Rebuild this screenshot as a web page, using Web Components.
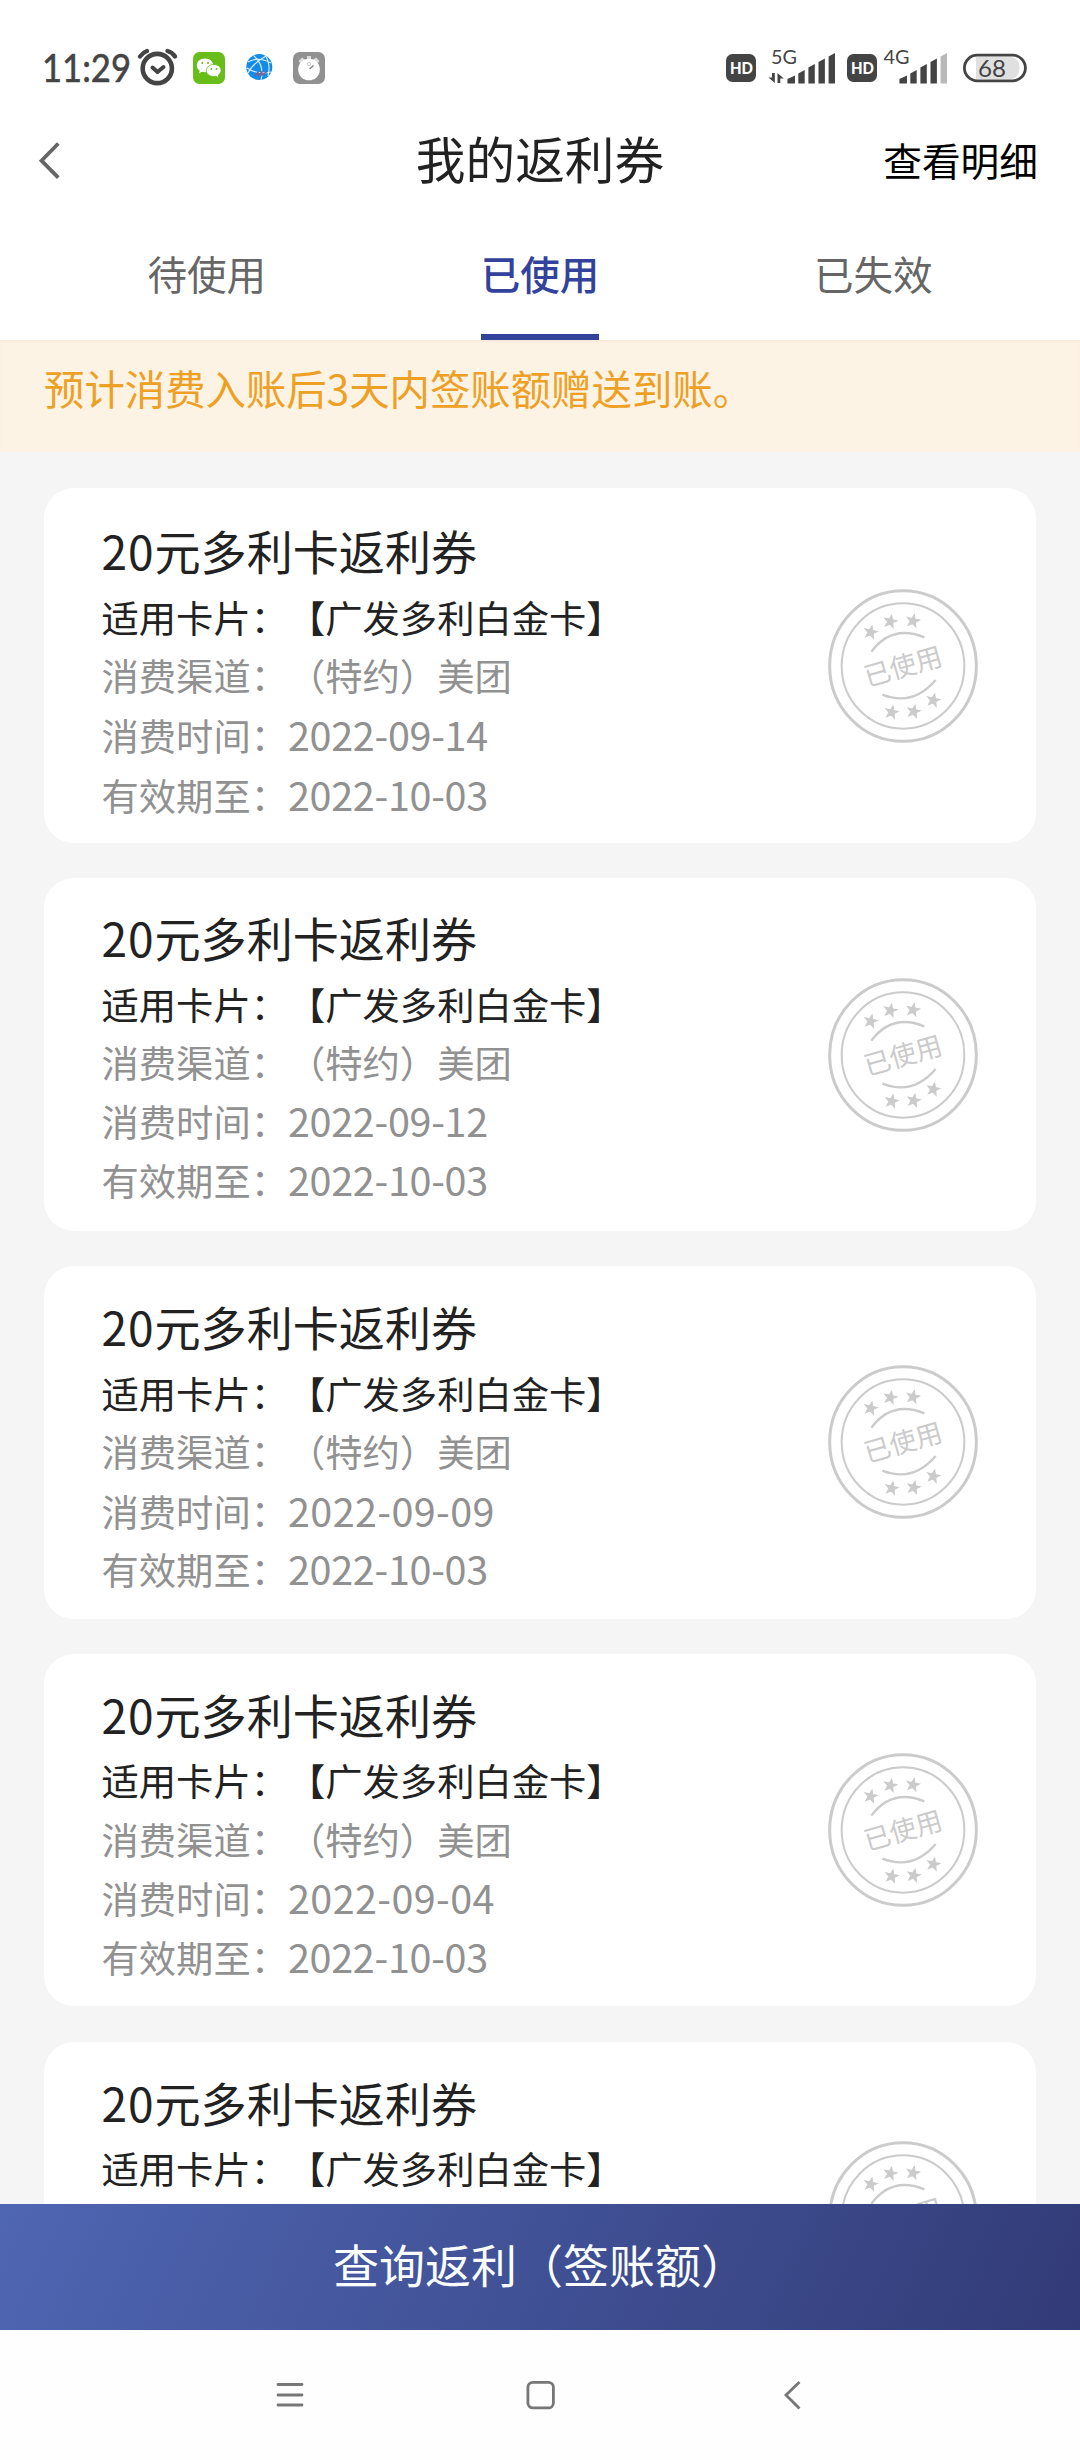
<!DOCTYPE html>
<html lang="zh-CN">
<head>
<meta charset="utf-8">
<title>我的返利券</title>
<style>
  body {
    margin: 0;
    background: #f5f5f5;
    font-family: "Noto Sans CJK SC", sans-serif;
    text-spacing-trim: space-all;
    color: #222;
  }
</style>
</head>
<body>
<coupon-page>
  <status-bar slot="top"></status-bar>
  <nav-header slot="top">我的返利券<span slot="action">查看明细</span></nav-header>
  <tab-bar slot="top">
    <tab-item>待使用</tab-item>
    <tab-item active>已使用</tab-item>
    <tab-item>已失效</tab-item>
  </tab-bar>
  <notice-bar slot="top">预计消费入账后3天内签账额赠送到账。</notice-bar>

  <coupon-card channel="（特约）美团" spent="2022-09-14" until="2022-10-03" style="--top: 27px; --last: 61px; --height: 355px"></coupon-card>
  <coupon-card channel="（特约）美团" spent="2022-09-12" until="2022-10-03" style="--top: 24px; --mid: 58px; --last: 60px"></coupon-card>
  <coupon-card channel="（特约）美团" spent="2022-09-09" until="2022-10-03"></coupon-card>
  <coupon-card channel="（特约）美团" spent="2022-09-04" until="2022-10-03"></coupon-card>
  <coupon-card></coupon-card>

  <query-button slot="bottom">查询返利（签账额）</query-button>
  <system-nav slot="bottom"></system-nav>
</coupon-page>

<script>
class BaseElement extends HTMLElement {
  constructor() {
    super()
    this.attachShadow({ mode: 'open' })
  }

  connectedCallback() {
    this.shadowRoot.innerHTML = this.template()
  }
}

class CouponPage extends BaseElement {
  template() {
    return `
      <style>
        :host {
          display: flex;
          flex-direction: column;
          width: 1080px;
          height: 2460px;
          overflow: hidden;
        }
        .list {
          flex: 1;
          min-height: 0;
          overflow: hidden;
          box-sizing: border-box;
          padding: 36px 44px 0;
          display: flex;
          flex-direction: column;
          gap: 35.3px;
        }
      </style>
      <slot name="top"></slot>
      <div class="list"><slot></slot></div>
      <slot name="bottom"></slot>
    `
  }
}

// Clock and notification icons on the left, signal and battery on the right
class StatusBar extends BaseElement {
  template() {
    return `
      <style>
        :host {
          display: flex;
          justify-content: space-between;
          height: 110px;
          background: #fff;
        }
        svg { display: block; }
        text { font-family: Lato, sans-serif; fill: #444; }
      </style>
      <svg width="340" height="110" viewBox="0 0 340 110">
        <text x="42" y="82" font-size="39" stroke="#444" stroke-width=".6" textLength="89" lengthAdjust="spacingAndGlyphs">11:29</text>
        <g fill="none" stroke="#444" stroke-linecap="round">
          <circle cx="157.3" cy="68.5" r="14.6" stroke-width="4.6"/>
          <path d="M140 56.5q3-4 7-5.500M167.500 51q5 1.500 7.500 5.500" stroke-width="4.400"/>
          <path d="M152.500 67.500l5 4.500 6-5" stroke-width="4" stroke-linejoin="round"/>
        </g>
        <rect x="193" y="52" width="32" height="32" rx="6.500" fill="#68bd18"/>
        <path d="M205 58.500c-5 0-8.200 3.200-8.200 6.800 0 2.300 1.200 4.200 3 5.500l-.8 2.500 3.200-1.500c5 1.500 11-.5 11-6.500 0-4-3.500-6.800-8.200-6.800z" fill="#fff"/>
        <path d="M213.800 64.500c-4.500 0-7.500 2.800-7.500 6 0 4.300 4.500 6.800 9.500 5.700l3 1.500-.6-2.400c5.300-3.500 3-10.800-4.400-10.800z" fill="#fff" stroke="#68bd18" stroke-width=".8"/>
        <g fill="#68bd18">
          <circle cx="202.300" cy="63" r="1"/><circle cx="208" cy="63" r="1"/>
          <circle cx="211.300" cy="69" r=".9"/><circle cx="216.500" cy="69" r=".9"/>
        </g>
        <circle cx="259.300" cy="67" r="13" fill="#158be8"/>
        <g fill="none" stroke="#d9f0ff" stroke-width="1.100">
          <path d="M248 62q10-6 23 1M254 56q11 10 7 24M266 56q-14 8-18 17M247 68q10 7 24 4M265 55q6 9 3 21"/>
        </g>
        <path d="M255 76l3-3.500 1 3 3-4v3.500l5-3.500" fill="none" stroke="#77608f" stroke-width="1.400"/>
        <rect x="293" y="52" width="32" height="32" rx="6.500" fill="#919191"/>
        <path d="M307 56h4v5h-4zM298.500 61l3.500-3.500 4 3-4.500 4.500zM319.500 61l-3.500-3.500-4 3 4.500 4.500z" fill="#dcdcdc"/>
        <circle cx="309" cy="69.500" r="10.800" fill="#fff"/>
        <path d="M309.500 69l4-3.500" stroke="#777" stroke-width="1.200"/>
        <circle cx="309" cy="64" r="1.600" fill="none" stroke="#bbb" stroke-width=".8"/>
      </svg>
      <svg width="380" height="110" viewBox="700 0 380 110">
        ${this.hd(726)}
        <text x="771" y="63.500" font-size="20" textLength="26" lengthAdjust="spacingAndGlyphs">5G</text>
        <path d="M774.800 73v10l-6.300-5.500h3.500V73zM777.500 83V73l6.300 5.500h-3.500V83z" fill="#444"/>
        ${this.bars(787.4, false)}
        ${this.hd(847)}
        <text x="883.500" y="63.500" font-size="20" textLength="26" lengthAdjust="spacingAndGlyphs">4G</text>
        ${this.bars(899.4, true)}
        <path d="M976 57h33q10.500 0 10.500 11T1009 79h-33z" fill="#e0e0e0"/>
        <rect x="964.400" y="55.200" width="61" height="25.600" rx="12.800" fill="none" stroke="#444" stroke-width="2.800"/>
        <text x="978" y="76.500" font-size="24" textLength="28" lengthAdjust="spacingAndGlyphs">68</text>
      </svg>
    `
  }

  hd(x) {
    return `
      <rect x="${x}" y="54" width="30" height="28" rx="6.500" fill="#444"/>
      <text x="${x + 4}" y="74" font-size="16.500" font-weight="900" style="fill:#fff" textLength="23" lengthAdjust="spacingAndGlyphs">HD</text>
    `
  }

  bars(x, weak) {
    return [76, 70.5, 64.5, 59, 53.5].map((y, i) => {
      const left = i ? x + i * 10.1 + 0.8 : x
      const width = i ? 6.4 : 7.6
      const color = weak && i === 4 ? '#b8b8b8' : '#444'
      return `<path d="M${left} 83.600V${y + 3}l${width}-3.500V83.600z" fill="${color}"/>`
    }).join('')
  }
}

class NavHeader extends BaseElement {
  template() {
    return `
      <style>
        :host {
          display: grid;
          grid-template-columns: 1fr auto 1fr;
          align-items: center;
          height: 100px;
          padding: 0 42px 0 38px;
          background: #fff;
          font-size: 49.700px;
          line-height: 94px;
        }
        svg { display: block; }
        .title {
          height: 100px;
          padding-left: 4px;
        }
        .action {
          justify-self: end;
          height: 100px;
          font-size: 38.700px;
          line-height: 98px;
          color: #000;
        }
      </style>
      <svg width="24" height="40" viewBox="38 140 24 40">
        <path d="M58.300 143.500L41.500 160.700l16.800 17" fill="none" stroke="#666" stroke-width="3.800"/>
      </svg>
      <div class="title"><slot></slot></div>
      <div class="action"><slot name="action"></slot></div>
    `
  }
}

class TabBar extends BaseElement {
  template() {
    return `
      <style>
        :host {
          display: flex;
          height: 130px;
          padding: 0 40px;
          background: #fff;
        }
      </style>
      <slot></slot>
    `
  }
}

class TabItem extends BaseElement {
  template() {
    return `
      <style>
        :host {
          flex: 1;
          display: flex;
          justify-content: center;
          font-size: 39.500px;
          line-height: 126px;
          color: #666;
        }
        span {
          box-sizing: border-box;
          height: 129.500px;
        }
        :host([active]) span {
          border-bottom: 6px solid #33439b;
          color: #33439b;
          font-weight: 500;
        }
      </style>
      <span><slot></slot></span>
    `
  }
}

class NoticeBar extends BaseElement {
  template() {
    return `
      <style>
        :host {
          display: block;
          box-sizing: border-box;
          height: 112px;
          padding-left: 44px;
          background: #fdf3e4;
          box-shadow: inset 0 2px 2px #f8eadb;
          color: #eda024;
          font-size: 40.400px;
          line-height: 96px;
        }
      </style>
      <slot></slot>
    `
  }
}

// Round "used" stamp
class UsedStamp extends BaseElement {
  template() {
    const stars = [[211, 218], [270, 186], [338, 184], [274, 458], [340, 456], [399, 422]]
    return `
      <style>
        :host { display: block; }
        svg { display: block; }
      </style>
      <svg width="152" height="156" viewBox="80 85 456 468">
        <g fill="none" stroke="#cbcbcb">
          <ellipse cx="308" cy="319" rx="220" ry="226" stroke-width="9"/>
          <ellipse cx="308" cy="319" rx="184" ry="188" stroke-width="6"/>
          <path d="M213 276Q275 193 372 233M246 405Q338 441 406 361" stroke-width="7"/>
        </g>
        ${stars.map(([x, y]) => `<path d="M0-20l5 13 14 0-11 9 4 14-12-8-12 8 4-14-11-9 14 0z" transform="translate(${x} ${y}) rotate(12)" fill="#cbcbcb" stroke="#cbcbcb" stroke-width="3"/>`).join('')}
        <text x="308" y="349" transform="rotate(-16 308 320)" text-anchor="middle" font-size="80" fill="#cbcbcb">已使用</text>
      </svg>
    `
  }
}

class CouponCard extends BaseElement {
  template() {
    const channel = this.getAttribute('channel')
    const spent = this.getAttribute('spent')
    const until = this.getAttribute('until')
    return `
      <style>
        :host {
          flex: none;
          display: flex;
          justify-content: space-between;
          align-items: center;
          box-sizing: border-box;
          height: var(--height, 352.500px);
          padding: 0 57px 0 57.500px;
          border-radius: 30px;
          background: #fff;
          overflow: hidden;
        }
        .info {
          align-self: start;
          display: grid;
          grid-template-rows: 72px 59px 58px var(--mid, 60px) var(--last, 57px);
          align-items: center;
          padding-top: var(--top, 25px);
          font-size: 37.300px;
          line-height: 54px;
          white-space: nowrap;
          color: #919191;
        }
        .title {
          padding-bottom: 2px;
          font-size: 46.100px;
          color: #222;
        }
        .number { letter-spacing: .9px; }
        .card { color: #222; }
        .row {
          display: flex;
          align-items: baseline;
        }
        .date {
          font-size: 39.500px;
          letter-spacing: .4px;
        }
        .narrow { letter-spacing: -.3px; }
      </style>
      <div class="info">
        <div class="title"><span class="number">20</span>元多利卡返利券</div>
        <div class="card">适用卡片：【广发多利白金卡】</div>
        ${channel ? `<div>消费渠道：${channel}</div>` : ''}
        ${spent ? `<div class="row">消费时间：${this.date(spent)}</div>` : ''}
        ${until ? `<div class="row">有效期至：${this.date(until)}</div>` : ''}
      </div>
      <used-stamp></used-stamp>
    `
  }

  // "1" is drawn narrower, so dates that contain it get tighter tracking
  date(value) {
    return `<span class="date ${value.includes('1') ? 'narrow' : ''}">${value}</span>`
  }
}

class QueryButton extends BaseElement {
  template() {
    return `
      <style>
        :host {
          display: block;
          height: 126px;
          background: linear-gradient(115deg, #4f66b3, #323b77);
          color: #fafdff;
          font-size: 46px;
          line-height: 119px;
          text-align: center;
        }
      </style>
      <slot></slot>
    `
  }
}

class SystemNav extends BaseElement {
  template() {
    return `
      <style>
        :host {
          display: flex;
          justify-content: center;
          align-items: center;
          gap: 217px;
          height: 130px;
          padding-left: 2px;
          background: #fefefe;
        }
        svg {
          display: block;
          fill: none;
          stroke: #777;
          stroke-width: 2.800px;
          stroke-linecap: round;
        }
      </style>
      <svg width="34" height="34" viewBox="0 0 34 34"><path d="M5 6.500h24M5 17h24M5 27h24"/></svg>
      <svg width="34" height="34" viewBox="0 0 34 34"><rect x="3.900" y="4.400" width="25.500" height="25.500" rx="5"/></svg>
      <svg width="34" height="34" viewBox="0 0 34 34"><path d="M24.500 4L11 17l13.500 13.500" stroke-linecap="butt"/></svg>
    `
  }
}

customElements.define('coupon-page', CouponPage)
customElements.define('status-bar', StatusBar)
customElements.define('nav-header', NavHeader)
customElements.define('tab-bar', TabBar)
customElements.define('tab-item', TabItem)
customElements.define('notice-bar', NoticeBar)
customElements.define('used-stamp', UsedStamp)
customElements.define('coupon-card', CouponCard)
customElements.define('query-button', QueryButton)
customElements.define('system-nav', SystemNav)
</script>
</body>
</html>
